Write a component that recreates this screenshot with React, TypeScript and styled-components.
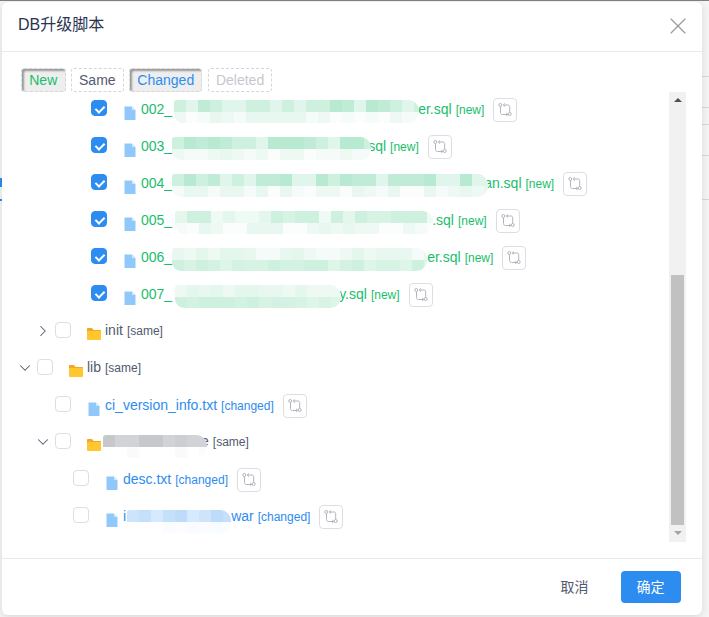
import React from "react";
import styled, { createGlobalStyle } from "styled-components";
import { X, ChevronRight, ChevronDown } from "lucide-react";

const Global = createGlobalStyle`
  html, body { margin: 0; padding: 0; background: #f7f7f7; }
  body { font-family: "Liberation Sans", "Noto Sans CJK SC", sans-serif; color: #515a6e; overflow: hidden; }
  * { box-sizing: border-box; }
`;

const Page = styled.div`
  width: 709px;
  height: 617px;
  display: flex;
  padding: 2px 0;
  background: #f5f5f6;
  border-top: 1px solid #808080;
  overflow: hidden;
  position: relative;
`;
const LeftEdge = styled.div`
  width: 2px;
  flex: none;
  margin-top: -2px;
  background:
    linear-gradient(#2d8cf0, #2d8cf0) 0 177px / 2px 9px no-repeat,
    linear-gradient(#2d8cf0, #2d8cf0) 0 198px / 2px 2px no-repeat;
`;
const RightEdge = styled.div`
  width: 7px;
  flex: none;
  margin-top: -2px;
  background:
    linear-gradient(#d8d8d8, #d8d8d8) 0 75px / 7px 1px no-repeat,
    linear-gradient(#d8d8d8, #d8d8d8) 0 106px / 7px 1px no-repeat,
    linear-gradient(#d8d8d8, #d8d8d8) 0 123px / 7px 1px no-repeat,
    linear-gradient(#d8d8d8, #d8d8d8) 0 154px / 7px 1px no-repeat,
    linear-gradient(#d8d8d8, #d8d8d8) 0 198px / 7px 1px no-repeat;
`;
const Dialog = styled.div`
  width: 700px;
  flex: none;
  height: 613px;
  margin-top: -1px;
  background: #fff;
  border-radius: 6px;
  box-shadow: 0 2px 8px rgba(0, 0, 0, 0.12);
  display: flex;
  flex-direction: column;
  position: relative;
`;
const Header = styled.div`
  height: 50px;
  flex: none;
  padding: 0 10px 2px 16px;
  display: flex;
  align-items: center;
  justify-content: space-between;
  border-bottom: 1px solid #e8eaec;
`;
const Title = styled.div`
  font-size: 16px;
  color: #2a3350;
  line-height: 20px;
  margin-top: -2px;
`;
const CloseIcon = styled(X)`
  display: block;
`;
const Body = styled.div`
  flex: 1;
  min-height: 0;
  padding: 16px 16px 16px 0;
  display: flex;
  flex-direction: column;
`;
const Filters = styled.div`
  display: flex;
  gap: 5.25px;
  padding-left: 19px;
  height: 24px;
  flex: none;
`;
const toneColor: Record<string, string> = {
  new: "#19be6b",
  same: "#515a6e",
  changed: "#2d8cf0",
  deleted: "#c5c8ce",
};
const FilterTag = styled.div<{ $tone: string; $on?: boolean }>`
  height: 24px;
  padding: 0 7.25px;
  font-size: 14px;
  line-height: 22px;
  border-radius: 3px;
  color: ${(p) => toneColor[p.$tone]};
  border: 1px dashed #d4d6db;
  background: ${(p) => (p.$on ? "#eeeeee" : "#fff")};
  box-shadow: ${(p) => (p.$on ? "inset 2px 2px 2px #9a9a9a" : "none")};
`;
const TreeArea = styled.div`
  flex: 1;
  min-height: 0;
  display: flex;
`;
const Tree = styled.div`
  flex: 1;
  min-width: 0;
  overflow: hidden;
`;
const Row = styled.div<{ $level: number }>`
  height: 37px;
  display: flex;
  align-items: center;
  padding-left: ${(p) => 17 + p.$level * 18}px;
  white-space: nowrap;
`;
const CaretSlot = styled.div`
  width: 18px;
  flex: none;
  height: 18px;
  margin-top: -3px;
  margin-left: -3.5px;
  margin-right: 3.5px;
  display: flex;
  align-items: center;
  justify-content: flex-start;
  color: #515a6e;
`;
const Check = styled.div<{ $on?: boolean }>`
  width: 16px;
  height: 16px;
  flex: none;
  margin-top: -5px;
  border-radius: 4px;
  border: 1px solid ${(p) => (p.$on ? "#2d8cf0" : "#dcdee2")};
  background: ${(p) => (p.$on ? "#2d8cf0" : "#fff")};
  position: relative;
  &::after {
    content: "";
    display: ${(p) => (p.$on ? "block" : "none")};
    position: absolute;
    left: 5px;
    top: 2.5px;
    width: 4px;
    height: 7px;
    border: 2px solid #fff;
    border-top: 0;
    border-left: 0;
    transform: rotate(45deg);
  }
`;
const FileGlyph = styled.svg`
  width: 12px;
  height: 14px;
  flex: none;
  margin-left: 17px;
  margin-right: 5px;
  margin-top: 5px;
`;
const FolderGlyph = styled.svg`
  width: 14px;
  height: 12px;
  flex: none;
  margin-left: 16px;
  margin-right: 4px;
  margin-top: 3px;
`;
const Label = styled.div<{ $tone: string; $up?: boolean }>`
  display: flex;
  align-items: center;
  font-size: 14px;
  line-height: 16px;
  margin-top: ${(p) => (p.$up ? -5 : -3)}px;
  color: ${(p) => toneColor[p.$tone]};
`;
const Tag = styled.span`
  font-size: 12px;
  margin-left: 4px;
  margin-top: 1px;
`;
const CompareBtn = styled.div`
  width: 24px;
  height: 24px;
  flex: none;
  margin-left: 9px;
  margin-top: -1px;
  border: 1px solid #dcdee2;
  border-radius: 4px;
  display: flex;
  align-items: center;
  justify-content: center;
  background: #fff;
`;
const CompareGlyph = styled.svg`
  width: 16px;
  height: 16px;
  fill: none;
  stroke: #b0b4bd;
  stroke-width: 1;
`;
const Smudge = styled.span<{ $w: number; $ml?: number; $mr?: number; $shift?: number }>`
  width: ${(p) => p.$w}px;
  margin-left: ${(p) => p.$ml ?? 0}px;
  margin-right: ${(p) => p.$mr ?? 0}px;
  height: 23px;
  margin-top: 5px;
  flex: none;
  display: grid;
  grid-template-rows: 12px 11px;
  grid-auto-flow: column;
  grid-auto-columns: 12px;
  overflow: hidden;
  border-radius: 3px 11px 11px 9px;
  position: relative;
  transform: translateY(${(p) => p.$shift ?? 0}px);
`;
const SmudgeCell = styled.span<{ $c: string }>`
  background: rgb(${(p) => p.$c});
`;
const ScrollBar = styled.div`
  width: 17px;
  flex: none;
  background: #f1f1f1;
  display: flex;
  flex-direction: column;
  align-items: center;
`;
const ScrollArrow = styled.div<{ $down?: boolean }>`
  width: 0;
  height: 0;
  flex: none;
  border-left: 4px solid transparent;
  border-right: 4px solid transparent;
  ${(p) =>
    p.$down
      ? "border-top: 4px solid #a3a3a3; margin-top: 6px;"
      : "border-bottom: 4px solid #505050; margin-top: 6px;"}
`;
const ScrollThumb = styled.div`
  width: 13px;
  height: 250px;
  flex: none;
  margin-top: 173px;
  background: #c1c1c1;
`;
const Footer = styled.div`
  flex: none;
  border-top: 1px solid #e8eaec;
  padding: 12px 21px 12px 0;
  display: flex;
  justify-content: flex-end;
  gap: 16px;
`;
const Button = styled.div<{ $primary?: boolean }>`
  width: 60px;
  height: 32px;
  border-radius: 4px;
  font-size: 14px;
  padding: 0 1px 2px 0;
  display: flex;
  align-items: center;
  justify-content: center;
  background: ${(p) => (p.$primary ? "#2d8cf0" : "#fff")};
  color: ${(p) => (p.$primary ? "#fff" : "#515a6e")};
`;

const palettes: Record<string, [string[], string[]]> = {
  green: [
    ["183,234,209", "205,240,223", "224,245,235", "192,236,215"],
    ["245,251,248", "238,249,243", "250,253,251", "232,247,240"],
  ],
  greenMid: [
    ["214,243,228", "228,247,237", "238,250,244", "205,240,223"],
    ["238,249,243", "245,251,248", "232,247,240", "250,253,251"],
  ],
  greenLow: [
    ["238,249,243", "228,247,237", "245,251,248", "232,247,240"],
    ["214,243,228", "205,240,223", "222,245,233", "212,242,227"],
  ],
  blue: [
    ["190,220,250", "205,228,251", "215,233,252", "197,224,250"],
    ["252,253,255", "248,251,255", "255,255,255", "250,252,255"],
  ],
  gray: [
    ["210,211,214", "199,200,204", "218,219,222", "205,206,210"],
    ["255,255,255", "252,252,252", "255,255,255", "250,250,250"],
  ],
};

type BlurSpec = { w: number; ml?: number; mr?: number; kind?: string; shift?: number };

function Blur({ w, ml, mr, kind = "green", shift, seed = 1 }: BlurSpec & { seed?: number }) {
  const cols = Math.ceil(w / 12);
  const cells: React.ReactNode[] = [];
  const [top, bottom] = palettes[kind];
  for (let i = 0; i < cols; i++) {
    const a = Math.abs(Math.floor(Math.sin(i * 7.3 + seed) * 1000)) % 4;
    const b = Math.abs(Math.floor(Math.sin(i * 3.1 + seed * 2) * 1000)) % 4;
    cells.push(<SmudgeCell key={`t${i}`} $c={top[a]} />);
    cells.push(<SmudgeCell key={`b${i}`} $c={bottom[b]} />);
  }
  return (
    <Smudge $w={w} $ml={ml} $mr={mr} $shift={shift}>
      {cells}
    </Smudge>
  );
}

const FileIcon = () => (
  <FileGlyph viewBox="0 0 12 14">
    <path d="M0.5 0.5H8L11.5 4V14H0.5Z" fill="#90c8fb" />
    <path d="M8 0.5V4H11.5Z" fill="#d2e8fd" />
  </FileGlyph>
);
const FolderIcon = () => (
  <FolderGlyph viewBox="0 0 14 12">
    <path d="M0 1.2C0 .5.4 0 1 0H5L6.5 2H13C13.6 2 14 2.4 14 3V4H0Z" fill="#f5a623" />
    <path d="M0 3H14V11C14 11.6 13.6 12 13 12H1C.4 12 0 11.6 0 11Z" fill="#ffc72d" />
  </FolderGlyph>
);
const Compare = () => (
  <CompareBtn>
    <CompareGlyph viewBox="0 0 16 16">
      <circle cx="3.3" cy="3" r="1.5" />
      <circle cx="12.7" cy="12" r="1.5" />
      <path d="M3.5 4.5V10.5C3.5 11.7 4.3 12.5 5.5 12.5H10.8" />
      <path d="M9.2 11L10.8 12.5L9.2 14" />
      <path d="M6.3 3H11C12 3 12.7 3.7 12.7 4.7V10.4" />
      <path d="M8 1.4L6.3 3L8 4.6" />
    </CompareGlyph>
  </CompareBtn>
);

type R = {
  level: number;
  caret?: "r" | "d";
  on?: boolean;
  folder?: boolean;
  tone: string;
  tag: string;
  pre?: string;
  blur?: BlurSpec;
  post?: string;
  compare?: boolean;
};

const rows: R[] = [
  { level: 3, on: true, tone: "new", tag: "[new]", pre: "002_", blur: { w: 245, ml: 2, mr: -1 }, post: "er.sql", compare: true },
  { level: 3, on: true, tone: "new", tag: "[new]", pre: "003_", blur: { w: 199, mr: -3 }, post: "sql", compare: true },
  { level: 3, on: true, tone: "new", tag: "[new]", pre: "004_", blur: { w: 316, mr: -4 }, post: "an.sql", compare: true },
  { level: 3, on: true, tone: "new", tag: "[new]", pre: "005_", blur: { w: 258, ml: 3, mr: -1, kind: "greenMid" }, post: ".sql", compare: true },
  { level: 3, on: true, tone: "new", tag: "[new]", pre: "006_", blur: { w: 255, kind: "greenLow" }, post: "er.sql", compare: true },
  { level: 3, on: true, tone: "new", tag: "[new]", pre: "007_", blur: { w: 166, ml: 3, mr: -2, kind: "greenLow" }, post: "y.sql", compare: true },
  { level: 1, caret: "r", folder: true, tone: "same", tag: "[same]", pre: "init" },
  { level: 0, caret: "d", folder: true, tone: "same", tag: "[same]", pre: "lib" },
  { level: 1, tone: "changed", tag: "[changed]", pre: "ci_version_info.txt", compare: true },
  { level: 1, caret: "d", folder: true, tone: "same", tag: "[same]", blur: { w: 104, kind: "gray", ml: -2, mr: -6, shift: 3 }, post: "e" },
  { level: 2, tone: "changed", tag: "[changed]", pre: "desc.txt", compare: true },
  { level: 2, tone: "changed", tag: "[changed]", pre: "i", blur: { w: 104, kind: "blue", ml: 1, shift: 3 }, post: "war", compare: true },
];

export default function App() {
  return (
    <Page>
      <Global />
      <LeftEdge />
      <Dialog>
        <Header>
          <Title>DB升级脚本</Title>
          <CloseIcon size={28} strokeWidth={1} color="#999" />
        </Header>
        <Body>
          <Filters>
            <FilterTag $tone="new" $on>New</FilterTag>
            <FilterTag $tone="same">Same</FilterTag>
            <FilterTag $tone="changed" $on>Changed</FilterTag>
            <FilterTag $tone="deleted">Deleted</FilterTag>
          </Filters>
          <TreeArea>
            <Tree>
              {rows.map((r, i) => (
                <Row key={i} $level={r.level}>
                  <CaretSlot>
                    {r.caret === "r" && <ChevronRight size={18} strokeWidth={1.4} />}
                    {r.caret === "d" && <ChevronDown size={18} strokeWidth={1.4} />}
                  </CaretSlot>
                  <Check $on={r.on} />
                  {r.folder ? <FolderIcon /> : <FileIcon />}
                  <Label $tone={r.tone} $up={r.folder}>
                    {r.pre}
                    {r.blur && <Blur {...r.blur} seed={i + 1} />}
                    {r.post}
                    <Tag>{r.tag}</Tag>
                  </Label>
                  {r.compare && <Compare />}
                </Row>
              ))}
            </Tree>
            <ScrollBar>
              <ScrollArrow />
              <ScrollThumb />
              <ScrollArrow $down />
            </ScrollBar>
          </TreeArea>
        </Body>
        <Footer>
          <Button>取消</Button>
          <Button $primary>确定</Button>
        </Footer>
      </Dialog>
      <RightEdge />
    </Page>
  );
}
